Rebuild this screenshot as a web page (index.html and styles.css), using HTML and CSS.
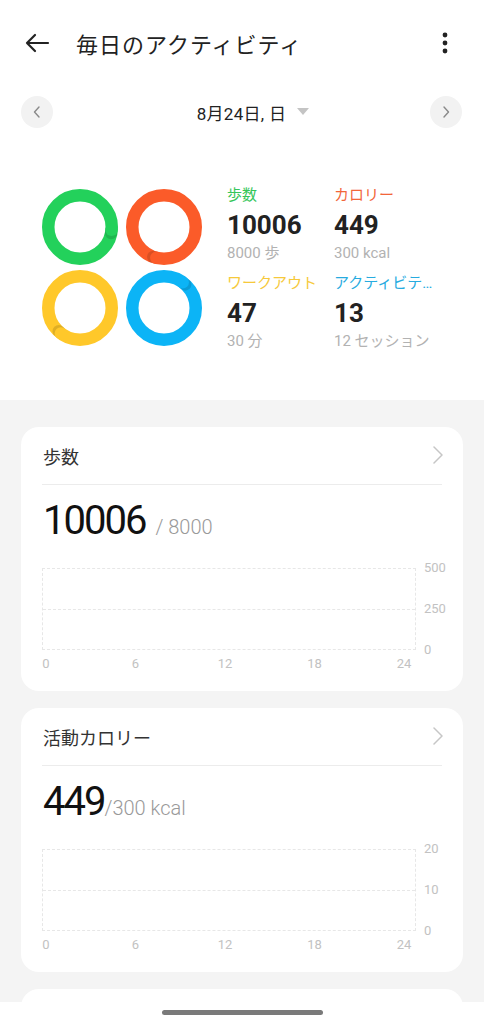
FILE: index.html
```html
<!DOCTYPE html>
<html lang="ja">
<head>
    <meta charset="UTF-8">
    <meta name="viewport" content="width=device-width, initial-scale=1.0">
    <title>毎日のアクティビティ</title>
    <link rel="stylesheet" href="styles.css">
</head>
<body>
    <div class="top">
        <div class="appbar">
            <svg class="back" width="26" height="20" viewBox="0 0 26 20"><path d="M24 10H3M11 2L3 10l8 8" fill="none" stroke="#222" stroke-width="2.2" stroke-linecap="round" stroke-linejoin="round"/></svg>
            <h1>毎日のアクティビティ</h1>
            <svg class="more" width="8" height="22" viewBox="0 0 8 22"><circle cx="4" cy="3" r="2.4" fill="#222"/><circle cx="4" cy="11" r="2.4" fill="#222"/><circle cx="4" cy="19" r="2.4" fill="#222"/></svg>
        </div>

        <div class="daterow">
            <span class="navbtn"><svg width="10" height="12" viewBox="0 0 10 12"><path d="M7 1L2.5 6 7 11" fill="none" stroke="#8a8a8a" stroke-width="1.4" stroke-linecap="round" stroke-linejoin="round"/></svg></span>
            <span class="date">8月24日, 日</span>
            <span class="navbtn"><svg width="10" height="12" viewBox="0 0 10 12"><path d="M3 1l4.5 5L3 11" fill="none" stroke="#8a8a8a" stroke-width="1.4" stroke-linecap="round" stroke-linejoin="round"/></svg></span>
        </div>

        <div class="summary">
            <div class="rings">
                <svg viewBox="0 0 76 76"><circle cx="38" cy="38" r="31.75" fill="none" stroke="#23d15b" stroke-width="12.5"/><circle cx="69.1" cy="44" r="6.25" fill="rgba(0,0,0,.13)"/><circle cx="69.6" cy="40.8" r="6.25" fill="#23d15b"/></svg>
                <svg viewBox="0 0 76 76"><circle cx="38" cy="38" r="31.75" fill="none" stroke="#fb5b29" stroke-width="12.5"/><circle cx="27.3" cy="68" r="6.25" fill="rgba(0,0,0,.13)"/><circle cx="30.3" cy="68.8" r="6.25" fill="#fb5b29"/></svg>
                <svg viewBox="0 0 76 76"><circle cx="38" cy="38" r="31.75" fill="none" stroke="#ffc82a" stroke-width="12.5"/><circle cx="16.8" cy="61.2" r="6.25" fill="rgba(0,0,0,.13)"/><circle cx="18.9" cy="63.4" r="6.25" fill="#ffc82a"/></svg>
                <svg viewBox="0 0 76 76"><circle cx="38" cy="38" r="31.75" fill="none" stroke="#0cb4f6" stroke-width="12.5"/><circle cx="59.2" cy="14.4" r="6.25" fill="rgba(0,0,0,.13)"/><circle cx="56.7" cy="12.3" r="6.25" fill="#0cb4f6"/></svg>
            </div>
            <div class="stats">
                <div class="stat">
                    <div class="label green">歩数</div>
                    <div class="value">10006</div>
                    <div class="goal">8000 歩</div>
                </div>
                <div class="stat">
                    <div class="label orange">カロリー</div>
                    <div class="value">449</div>
                    <div class="goal">300 kcal</div>
                </div>
                <div class="stat">
                    <div class="label yellow">ワークアウト</div>
                    <div class="value">47</div>
                    <div class="goal">30 分</div>
                </div>
                <div class="stat">
                    <div class="label blue">アクティビテ…</div>
                    <div class="value">13</div>
                    <div class="goal">12 セッション</div>
                </div>
            </div>
        </div>
    </div>

    <div class="cards">
        <div class="card">
            <div class="card-head">
                <span>歩数</span>
                <svg width="12" height="18" viewBox="0 0 12 18"><path d="M2 1l8 8-8 8" fill="none" stroke="#c6c6c6" stroke-width="1.5" stroke-linecap="round" stroke-linejoin="round"/></svg>
            </div>
            <div class="card-value"><span class="big">10006</span><span class="of spaced">/ 8000</span></div>
            <div class="chart">
                <div class="plot"><div class="mid"></div></div>
                <div class="yaxis"><span>500</span><span>250</span><span>0</span></div>
                <div class="xaxis"><span>0</span><span>6</span><span>12</span><span>18</span><span>24</span></div>
            </div>
        </div>

        <div class="card">
            <div class="card-head">
                <span>活動カロリー</span>
                <svg width="12" height="18" viewBox="0 0 12 18"><path d="M2 1l8 8-8 8" fill="none" stroke="#c6c6c6" stroke-width="1.5" stroke-linecap="round" stroke-linejoin="round"/></svg>
            </div>
            <div class="card-value"><span class="big">449</span><span class="of">/300 kcal</span></div>
            <div class="chart">
                <div class="plot"><div class="mid"></div></div>
                <div class="yaxis"><span>20</span><span>10</span><span>0</span></div>
                <div class="xaxis"><span>0</span><span>6</span><span>12</span><span>18</span><span>24</span></div>
            </div>
        </div>

        <div class="card card-peek"></div>
    </div>

    <div class="homebar"><span></span></div>
</body>
</html>
```

FILE: styles.css
```css
body {
    font-family: Roboto, "Noto Sans CJK JP", sans-serif;
    margin: 0;
    padding: 0;
    background-color: #f4f4f4;
    color: #222;
}
.top {
    background-color: #fff;
}
.appbar {
    height: 86px;
    display: flex;
    align-items: center;
    padding: 0 35px 0 24px;
}
.appbar h1 {
    margin: 0 0 0 26px;
    font-size: 22px;
    font-weight: 400;
    letter-spacing: 1px;
    flex: 1;
}
.back {
    display: block;
}
.daterow {
    height: 52px;
    display: flex;
    align-items: center;
    justify-content: space-between;
    padding: 0 22px 0 21px;
}
.navbtn {
    width: 32px;
    height: 32px;
    border-radius: 50%;
    background-color: #f2f2f2;
    display: flex;
    align-items: center;
    justify-content: center;
}
.date {
    position: relative;
    font-size: 17px;
    letter-spacing: 0.3px;
}
.date::after {
    content: "";
    position: absolute;
    left: calc(100% + 11px);
    top: 8px;
    border-left: 6px solid transparent;
    border-right: 6px solid transparent;
    border-top: 7px solid #c4c4c4;
}
.summary {
    display: flex;
    padding: 47px 0 51px 42px;
}
.rings {
    display: grid;
    grid-template-columns: 76px 76px;
    column-gap: 8px;
    row-gap: 5px;
    margin-top: 4px;
    height: 157px;
}
.rings svg {
    width: 76px;
    height: 76px;
    display: block;
}
.stats {
    display: grid;
    grid-template-columns: 107px 107px;
    row-gap: 12px;
    margin-left: 25px;
}
.stat {
    height: 76px;
}
.label {
    font-size: 15px;
    line-height: 20px;
    white-space: nowrap;
}
.green { color: #35c65a; }
.orange { color: #f2663a; }
.yellow { color: #f6c93b; }
.blue { color: #27abdf; }
.value {
    font-size: 26px;
    font-weight: 700;
    line-height: 40px;
    color: #222;
}
.goal {
    font-size: 15px;
    line-height: 16px;
    color: #b2b2b2;
    white-space: nowrap;
}
.cards {
    padding: 27px 21px 0;
    display: flex;
    flex-direction: column;
    gap: 17px;
}
.card {
    background-color: #fff;
    border-radius: 18px;
    padding: 0 21px 19px;
}
.card-head {
    height: 57px;
    display: flex;
    align-items: center;
    justify-content: space-between;
    border-bottom: 1px solid #ececec;
    font-size: 18px;
    color: #333;
    padding-left: 1px;
}
.card-head svg {
    margin-right: -2px;
    margin-top: -2px;
}
.card-value {
    margin-top: 12px;
    height: 48px;
    line-height: 48px;
    padding-left: 1px;
}
.big {
    font-size: 40px;
    letter-spacing: -2px;
    color: #111;
}
.of {
    font-size: 20px;
    font-weight: 300;
    line-height: 1;
    color: #999;
}
.of.spaced {
    margin-left: 10px;
}
.chart {
    margin-top: 23px;
    display: grid;
    grid-template-columns: 374px 1fr;
}
.plot {
    height: 80px;
    border: 1px dashed #e7e7e7;
    display: flex;
    flex-direction: column;
    justify-content: center;
}
.mid {
    border-top: 1px dashed #e7e7e7;
}
.yaxis {
    display: flex;
    flex-direction: column;
    justify-content: space-between;
    margin: -8px 0 -8px 8px;
    font-size: 13px;
    line-height: 16px;
    color: #c2c2c2;
}
.xaxis {
    display: flex;
    justify-content: space-between;
    margin-top: 6px;
    padding-right: 8px;
    font-size: 13px;
    line-height: 16px;
    color: #c2c2c2;
}
.xaxis span {
    width: 8px;
    display: flex;
    justify-content: center;
}
.card-peek {
    height: 120px;
    padding: 0;
}
.homebar {
    position: fixed;
    left: 0;
    right: 0;
    bottom: 0;
    height: 22px;
    background-color: #fff;
    display: flex;
    justify-content: center;
}
.homebar span {
    width: 161px;
    height: 5px;
    margin-top: 8px;
    border-radius: 3px;
    background-color: #7a7a7a;
}
```
